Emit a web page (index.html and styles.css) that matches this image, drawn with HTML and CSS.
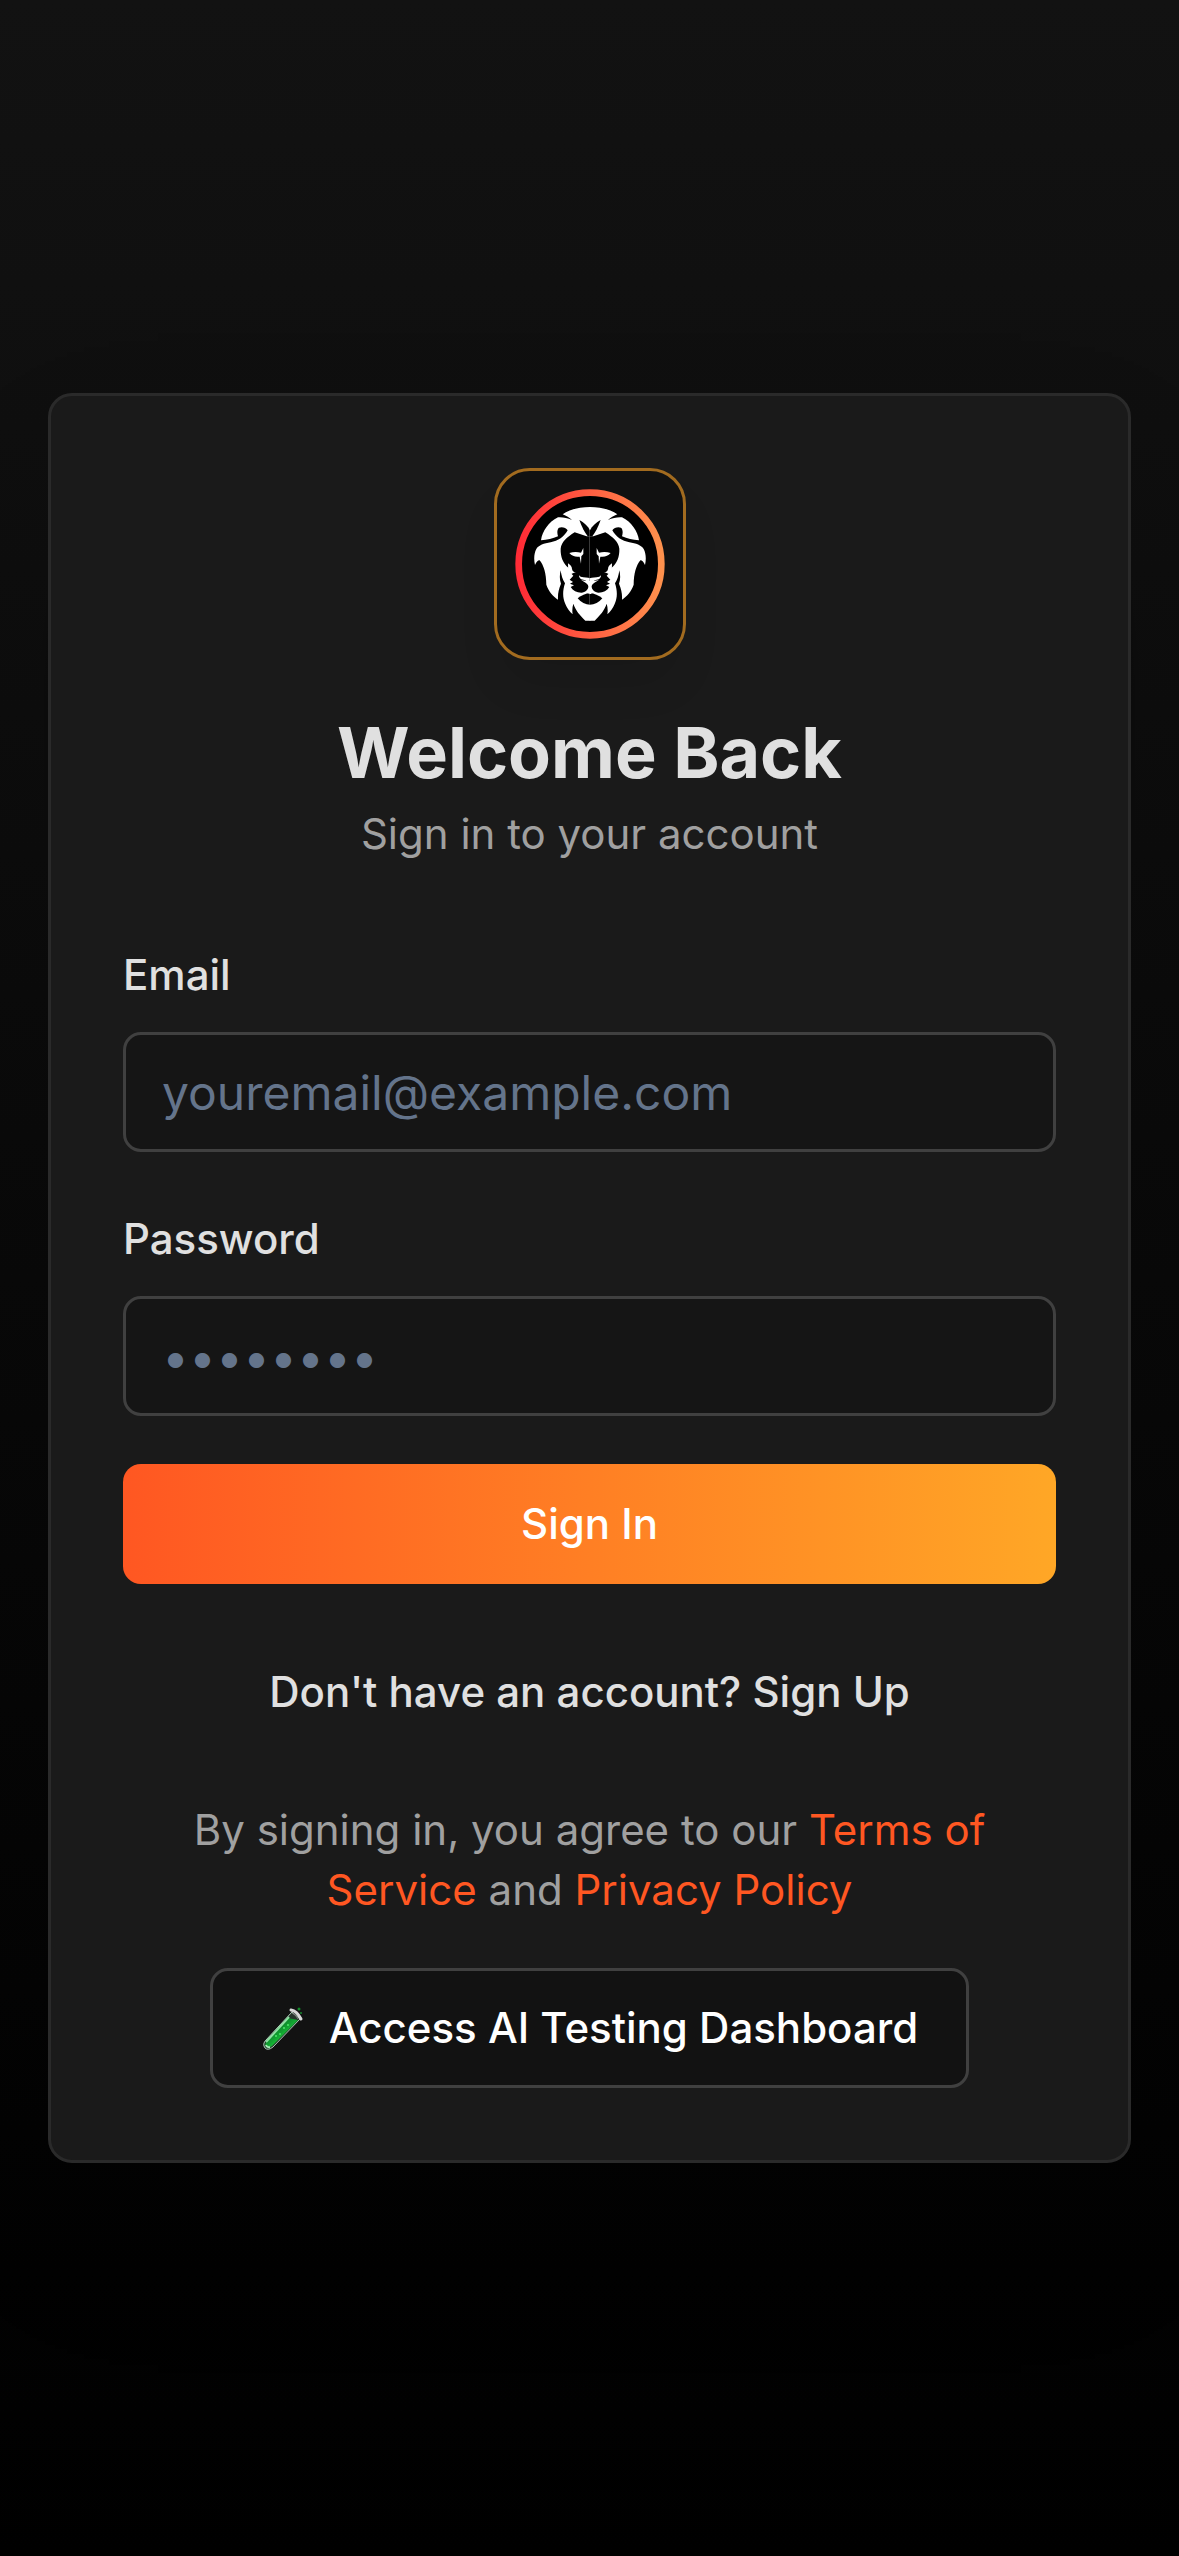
FILE: index.html
```html
<!DOCTYPE html>
<html lang="en">
<head>
<meta charset="utf-8">
<meta name="viewport" content="width=device-width, initial-scale=1">
<title>Sign In</title>
<link rel="stylesheet" href="styles.css">
</head>
<body>
<main class="page">
  <section class="card">
    <header class="intro">
      <div class="logo">
        <svg class="logo-art" viewBox="93 87 450 450" role="img" aria-label="Lion">
          <defs>
            <linearGradient id="ring" x1="0" y1="0" x2="1" y2="0">
              <stop offset="0" stop-color="#ff2b36"/>
              <stop offset="1" stop-color="#ff914d"/>
            </linearGradient>
            <g id="half">
              <!-- crown, ear and mane -->
              <path fill="#fff" d="M319 141C286 141 254 149 236 163C247 168 256 173 264 180C250 174 236 171 222 172C193 186 175 214 171 241C190 240 206 236 222 229C219 219 219 208 225 203C234 199 246 203 251 211C241 230 222 243 200 247C180 250 164 256 157 267C150 280 149 298 153 315C157 306 161 301 167 301C179 316 187 340 187 374C194 394 208 410 222 419C221 402 224 387 231 371C226 357 227 344 230 331C232 346 236 360 243 370C235 395 236 413 244 432C249 445 257 455 266 463C264 452 265 441 268 431C275 452 288 466 304 482H319Z"/>
              <!-- face -->
              <path d="M319 229H308L272 217C249 231 232 247 230 266C229 291 237 309 254 324L258 337L268 347L257 359L267 366L258 371L270 376L260 381C267 392 278 398 292 398C304 397 312 390 314 378C309 369 299 365 291 359C300 362 309 363 319 363Z"/>
              <path d="M319 400C305 400 292 406 281 415C291 428 304 434 319 434Z"/>
              <path d="M319 212C311 198 300 187 286 180C293 200 302 217 311 229H319Z"/>
              <path fill="#fff" d="M319 355C311 350 301 354 290 350L285 346C285 355 292 360 301 360C308 362 311 368 314 381V402H319Z"/>
              <path fill="#fff" d="M256 279C267 275 280 275 291 278L298 264L298 282L292 289L291 311L287 290C274 292 264 288 256 279Z"/>
              <path fill="#fff" d="M252 310C259 315 264 320 264 327C265 334 270 337 276 337C265 340 257 344 253 352Z"/>
            </g>
          </defs>
          <circle cx="318" cy="312" r="214" fill="#000" stroke="url(#ring)" stroke-width="20"/>
          <use href="#half"/>
          <use href="#half" transform="matrix(-1 0 0 1 636 0)"/>
        </svg>
      </div>
      <h1 class="title">Welcome Back</h1>
      <p class="subtitle">Sign in to your account</p>
    </header>
    <form class="form">
      <div class="field">
        <label class="label" for="email">Email</label>
        <input class="input" id="email" type="email" placeholder="youremail@example.com">
      </div>
      <div class="field">
        <label class="label" for="password">Password</label>
        <input class="input" id="password" type="password" placeholder="••••••••">
      </div>
      <button class="button submit" type="submit">Sign In</button>
    </form>
    <button class="button switch" type="button">Don't have an account? Sign Up</button>
    <p class="legal">By signing in, you agree to our <a href="#terms">Terms of Service</a> and <a href="#privacy">Privacy Policy</a></p>
    <button class="button testing" type="button">
      <svg class="tube" viewBox="0 0 44 44" aria-hidden="true">
        <defs>
          <linearGradient id="liquid" x1="0" y1="0" x2="1" y2="1">
            <stop offset="0.3" stop-color="#087a25"/>
            <stop offset="0.5" stop-color="#12a632"/>
            <stop offset="0.7" stop-color="#1fe03a"/>
          </linearGradient>
        </defs>
        <path d="M31 6L39 13L12 41Q7 45 4 42Q1 38 5 34Z" fill="#26342b" stroke="#a9c9b4" stroke-width="1"/>
        <path d="M27 12L37 14L11 40Q7 43 5 41Q3 38 6 35Z" fill="url(#liquid)"/>
        <path d="M5 36L28 11" stroke="#8ee0a2" stroke-width="2" fill="none"/>
        <path d="M5 39Q6 42 9 41" stroke="#a6ecb8" stroke-width="2" fill="none"/>
        <g fill="#4be868"><circle cx="23" cy="22" r="1"/><circle cx="19" cy="28" r="1"/><circle cx="15" cy="30" r="1"/><circle cx="27" cy="19" r="1"/></g>
        <path d="M30 4Q36 5 40 13" stroke="#d8d8d8" stroke-width="3" stroke-linecap="round" fill="none"/>
        <path d="M31 7Q35 9 37 13" stroke="#777" stroke-width="1" fill="none"/>
        <g fill="#148a2c"><circle cx="38" cy="3" r="1.500"/><circle cx="40" cy="7" r="1"/></g>
      </svg>
      Access AI Testing Dashboard
    </button>
  </section>
</main>
</body>
</html>
```
FILE: styles.css
```css
* { box-sizing: border-box; }
body { margin: 0; background: #000; color: #e0e0e0; font: 42px/60px Inter, "Noto Sans", sans-serif; }
.page { min-height: 100vh; padding: 48px; display: flex; align-items: center; justify-content: center; background: linear-gradient(#121212, #000); }
.card { width: 100%; max-width: 1344px; padding: 72px; display: flex; flex-direction: column; align-items: center; background: #1a1a1a; border: 3px solid #2a2a2a; border-radius: 24px; box-shadow: 0 75px 150px -36px rgba(0,0,0,.25); }
.intro { display: flex; flex-direction: column; align-items: center; text-align: center; }
.logo { width: 192px; height: 192px; padding: 18px; margin-bottom: 48px; background: #111; border: 3px solid #a26b1f; border-radius: 36px; box-shadow: 0 30px 45px -9px rgba(0,0,0,.1); }
.logo-art { display: block; width: 100%; height: 100%; }
.title { margin: 0 0 6px; font-size: 70px; line-height: 90px; font-weight: 700; }
.subtitle { margin: 0; color: #a0a0a0; }
.form { width: 100%; margin-top: 72px; display: flex; flex-direction: column; gap: 48px; }
.field { display: flex; flex-direction: column; gap: 18px; }
.label { font-weight: 500; line-height: 78px; }
.input { width: 100%; height: 120px; padding: 0 36px; font: inherit; font-size: 48px; color: #e0e0e0; background: #151515; border: 3px solid #404040; border-radius: 18px; }
.input::placeholder { color: #64748b; opacity: 1; }
.button { height: 120px; padding: 0 48px; border: 0; border-radius: 18px; font: inherit; font-weight: 500; cursor: pointer; }
.submit { color: #fff; background: linear-gradient(90deg, #ff5722, #ffa726); }
.switch { margin-top: 48px; color: #e0e0e0; background: none; }
.legal { margin: 48px 0; padding: 0 48px; color: #a0a0a0; text-align: center; }
.legal a { color: #ff5722; text-decoration: none; }
.testing { display: flex; align-items: center; gap: 24px; color: #fff; background: #121212; border: 3px solid #404040; }
.tube { width: 44px; height: 44px; }
```
